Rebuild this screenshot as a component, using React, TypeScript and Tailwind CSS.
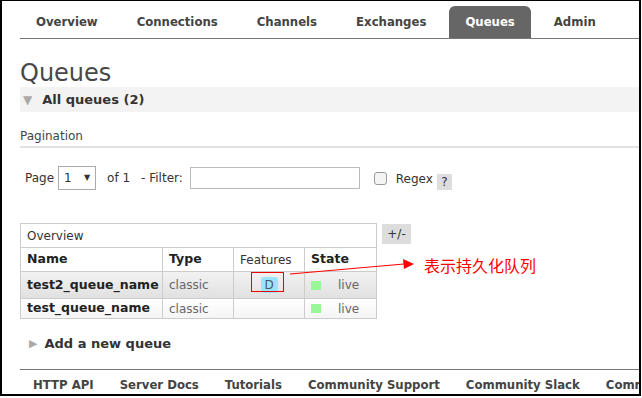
const tabs = ["Overview", "Connections", "Channels", "Exchanges", "Queues", "Admin"];
const footer = ["HTTP API", "Server Docs", "Tutorials", "Community Support", "Community Slack", "Commercial Support"];

const body = "font-['DejaVu_Sans',Verdana,sans-serif]";
const cond = "font-['DejaVu_Sans_Condensed','DejaVu_Sans',sans-serif]";

function Tabs() {
  return (
    <nav className={`mt-[5px] ml-[18px] flex h-[33px] items-end border-b border-[#777] ${cond}`}>
      {tabs.map((t) => (
        <span
          key={t}
          className={
            t === "Queues"
              ? "mr-[7px] flex h-[32px] items-center rounded-t-[6px] bg-[#666] px-4 text-[13px] font-bold text-white"
              : "mr-[7px] flex h-[32px] items-center px-4 text-[13px] font-bold text-[#444]"
          }
        >
          {t}
        </span>
      ))}
    </nav>
  );
}

function PageRow() {
  return (
    <div className={`mt-[18px] ml-[23px] flex h-[24px] items-center text-[12px] text-[#333] ${body}`}>
      <span>Page</span>
      <span className="ml-[4px] flex h-[24px] w-[38px] items-center justify-between border border-[#aaa] bg-white px-[5px]">
        <span>1</span>
        <span className="text-[8px]">▼</span>
      </span>
      <span className="ml-[11px]">of 1</span>
      <span className="ml-[11px]">- Filter:</span>
      <span className="ml-[7px] h-[22px] w-[170px] border border-[#bbb] bg-white" />
      <span className="ml-[14px] h-[13px] w-[13px] rounded-[3px] border border-[#999] bg-[#f4f4f4]" />
      <span className="ml-[9px] mt-[2px]">Regex</span>
      <span className="ml-[4px] mt-[7px] flex h-[16px] w-[15px] items-center justify-center bg-[#ddd] text-[#333]">?</span>
    </div>
  );
}

function QueueTable() {
  const cell = "border border-[#ccc] px-[6px]";
  const bold = "font-bold text-[12.5px] text-[#222]";
  return (
    <div className="mt-[33px] ml-[18px] flex items-start gap-[5px]">
      <table className={`w-[356px] table-fixed border-collapse text-[12px] text-[#333] ${body}`}>
        <colgroup>
          <col className="w-[142px]" />
          <col className="w-[71px]" />
          <col className="w-[71px]" />
          <col className="w-[72px]" />
        </colgroup>
        <tbody>
          <tr className="h-[24px] bg-white">
            <td colSpan={4} className={cell}>Overview</td>
          </tr>
          <tr className="h-[24px] bg-white">
            <th className={`${cell} text-left ${bold}`}>Name</th>
            <th className={`${cell} text-left ${bold}`}>Type</th>
            <th className={`${cell} text-left font-normal`}>Features</th>
            <th className={`${cell} text-left ${bold}`}>State</th>
          </tr>
          <tr className="h-[27px] bg-gradient-to-b from-[#f2f2f2] to-[#e0e0e0]">
            <td className={`${cell} whitespace-nowrap ${bold}`}>test2_queue_name</td>
            <td className={`${cell} text-[#666]`}>classic</td>
            <td className={`${cell} text-center`}>
              <span className="inline-flex h-[16px] w-[17px] items-center justify-center rounded-[3px] bg-[#99e5ff] text-[#555]">D</span>
            </td>
            <td className={`${cell} text-[#666]`}>
              <span className="flex items-center">
                <span className="h-[9px] w-[10px] bg-[#98f898]" />
                <span className="ml-[17px]">live</span>
              </span>
            </td>
          </tr>
          <tr className="h-[20px] bg-gradient-to-b from-white to-[#f4f4f4]">
            <td className={`${cell} whitespace-nowrap ${bold}`}>test_queue_name</td>
            <td className={`${cell} text-[#666]`}>classic</td>
            <td className={cell} />
            <td className={`${cell} text-[#666]`}>
              <span className="flex items-center">
                <span className="h-[9px] w-[10px] bg-[#98f898]" />
                <span className="ml-[17px]">live</span>
              </span>
            </td>
          </tr>
        </tbody>
      </table>
      <span className={`mt-[1px] flex h-[20px] w-[29px] items-center justify-center bg-[#ddd] text-[12px] text-[#333] ${body}`}>+/-</span>
    </div>
  );
}

export default function App() {
  return (
    <div className="relative h-[396px] w-[641px] overflow-hidden border-t border-l-2 border-r-2 border-b-2 border-black bg-white">
      <Tabs />
      <h1 className={`mt-[21px] ml-[18px] text-[24px] leading-[27px] text-[#484848] ${body}`}>Queues</h1>
      <div className={`ml-[18px] flex h-[25px] items-center bg-[#f3f3f3] text-[13px] font-bold text-[#333] ${body}`}>
        <span className="ml-[3px] text-[12px] text-[#aaa]">▼</span>
        <span className="ml-[10px]">All queues (2)</span>
      </div>
      <div className={`mt-[17px] ml-[18px] border-b-2 border-[#e2e2e2] pb-[2px] text-[12px] leading-[15px] text-[#444] ${body}`}>
        Pagination
      </div>
      <PageRow />
      <QueueTable />
      <div className={`mt-[15px] ml-[27px] flex items-center text-[13px] font-bold text-[#333] ${body}`}>
        <span className="text-[11px] text-[#aaa]">▶</span>
        <span className="ml-[7px]">Add a new queue</span>
      </div>
      <footer className={`mt-[15px] ml-[18px] flex border-t border-[#777] pt-[5px] whitespace-nowrap ${cond}`}>
        {footer.map((f) => (
          <span key={f} className="px-[13px] text-[13px] font-bold text-[#444]">{f}</span>
        ))}
      </footer>

      {/* annotation */}
      <span className="absolute left-[249px] top-[271px] h-[20px] w-[33px] border border-[#e00]" />
      <svg className="absolute left-0 top-0" width="641" height="396">
        <line x1="288" y1="273" x2="402" y2="263" stroke="#f00" strokeWidth="1.2" />
        <polygon points="401,258 412,263 402,268" fill="#f00" />
      </svg>
      <span className="absolute left-[422px] top-[254px] text-[16px] leading-[20px] text-[#f00] font-['Noto_Sans_CJK_SC',sans-serif]">表示持久化队列</span>
    </div>
  );
}
